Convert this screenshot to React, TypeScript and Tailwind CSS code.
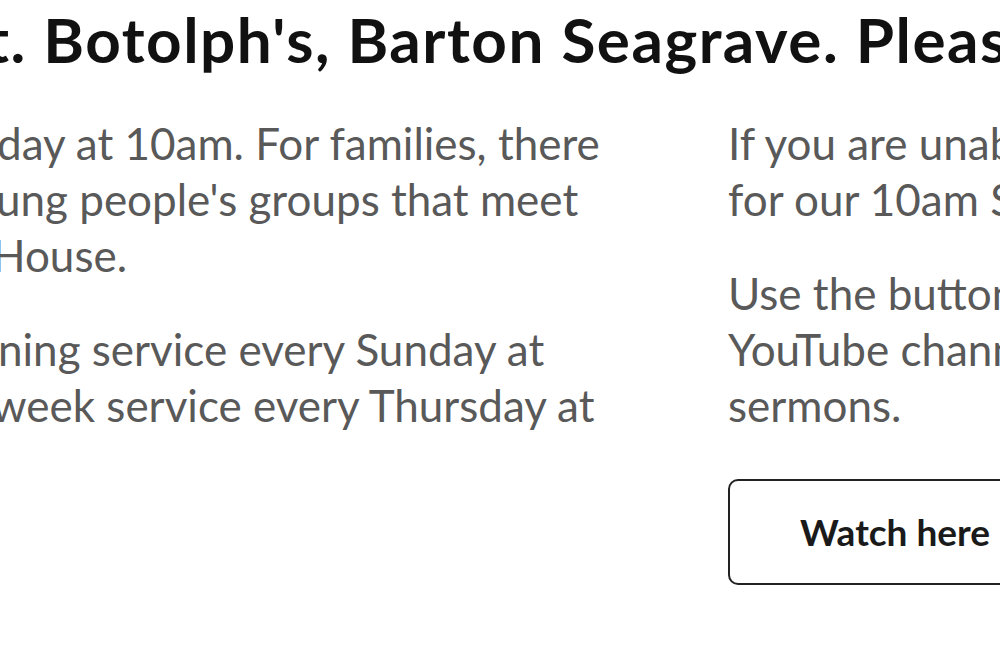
import React from "react";

const body = "font-['Lato','Source_Sans_Pro',sans-serif]";

function Line({ children, shift }: { children: React.ReactNode; shift: string }) {
  return <div className={`whitespace-nowrap ${shift}`}>{children}</div>;
}

export default function App() {
  return (
    <div className={`w-[1000px] h-[667px] overflow-hidden bg-white ${body}`}>
      <h1 className="whitespace-nowrap -ml-[14px] mt-[3px] text-[62px] leading-[72px] font-bold text-[#111111] tracking-[1.5px]">
        t. Botolph's, Barton Seagrave. Please join us
      </h1>
      <div className="flex mt-[40px] text-[44px] leading-[56px] text-[#595959]">
        <div className="w-[728px] shrink-0">
          <div>
            <Line shift="-ml-[3px]">day at 10am. For families, there</Line>
            <Line shift="-ml-[4px]">ung people's groups that meet</Line>
            <Line shift="-ml-[8px]">House.</Line>
          </div>
          <div className="mt-[38px]">
            <Line shift="-ml-[2px]">ning service every Sunday at</Line>
            <Line shift="-ml-[8px]">week service every Thursday at</Line>
          </div>
        </div>
        <div className="flex-1">
          <div>
            <Line shift="">If you are unable to join us</Line>
            <Line shift="">for our 10am Sunday service</Line>
          </div>
          <div className="mt-[38px]">
            <Line shift="">Use the button below to visit our</Line>
            <Line shift="">YouTube channel for recorded</Line>
            <Line shift="">sermons.</Line>
          </div>
          <button className="mt-[46px] w-[420px] h-[106px] border-2 border-[#222222] rounded-[10px] bg-white flex items-center pl-[70px] text-[37px] font-bold text-[#1a1a1a]">
            Watch here
          </button>
        </div>
      </div>
    </div>
  );
}
